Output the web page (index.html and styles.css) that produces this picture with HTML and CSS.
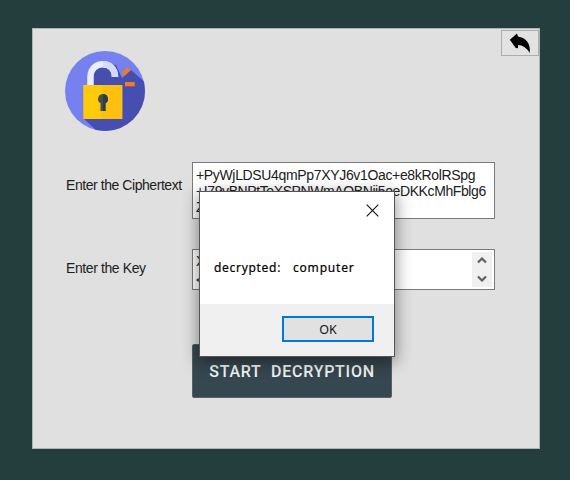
FILE: index.html
```html
<!DOCTYPE html>
<html lang="en">
<head>
<meta charset="utf-8">
<title>Decryption</title>
<link rel="stylesheet" href="styles.css">
</head>
<body>
<main class="panel">
  <header class="top">
    <svg class="logo" viewBox="0 0 80 80">
      <defs><clipPath id="disc"><circle cx="40" cy="40" r="40"/></clipPath></defs>
      <circle cx="40" cy="40" r="40" fill="#7680ee"/>
      <path clip-path="url(#disc)" fill="#464fb0" d="M18 67 L34 82 H82 V33 L66 19 L57 27 L51 14 L40 13 L28 20 V34 Z"/>
      <path fill="none" stroke="#e9edfd" stroke-width="6.500" d="M25.500 34V26C25.500 9 50 9 50 26"/>
      <path fill="none" stroke="#d3dcf6" stroke-width="6.500" d="M38 13.300C46 13.300 50 19 50 26"/>
      <path fill="#ffca0a" d="M18.300 34H57.300V68H18.300Z"/>
      <path fill="#fdb914" d="M38 34H57.300V68H36Z" opacity=".6"/>
      <path fill="#4b4b4b" d="M38 43a5 5 0 0 1 2.500 9.300V60h-5V52.300A5 5 0 0 1 38 43Z"/>
      <path fill="#263e50" d="M38 43a5 5 0 0 1 2.500 9.300V60H38Z"/>
      <path fill="#f27c25" d="M56.500 22 62.500 16.200 65.500 19.500 59.300 25ZM60 31H69.700V35.300H60Z"/>
    </svg>
    <button class="back" aria-label="Back">
      <svg viewBox="0 0 22 20"><path d="M.8 6.800 8 .6 9 3.500C17 4.500 22 11 20.700 20C17.500 14.500 13.500 12.300 9 12V15.300L6.800 15Z"/></svg>
    </button>
  </header>
  <section class="row cipher">
    <label class="label-cipher">Enter the Ciphertext</label>
    <div class="field"><span class="l1">+PyWjLDSU4qmPp7XYJ6v1Oac+e8kRolRSpg</span><span class="l2">+I79vBNPtTeXSPNWmAOBNji5oeDKKcMhFblg6</span><span>Z</span></div>
  </section>
  <section class="row key">
    <label class="label-key">Enter the Key</label>
    <div class="field"><div class="key-text"><span>X</span><span>&lt;</span></div>
      <div class="scroll">
        <svg viewBox="0 0 10 7"><path d="M1 5.500 5 1.500 9 5.500"/></svg>
        <svg viewBox="0 0 10 7"><path d="M1 1.500 5 5.500 9 1.500"/></svg>
      </div>
    </div>
  </section>
  <button class="start">START&nbsp; DECRYPTION</button>
</main>
<div class="dialog" role="dialog">
  <div class="content">
    <svg class="close" viewBox="0 0 13 13"><path d="M.7.700 12.300 12.300M12.300.700.700 12.300"/></svg>
    <p class="message"><span class="word1">decrypted:</span><span class="word2">computer</span></p>
  </div>
  <div class="actions"><button class="ok">OK</button></div>
</div>
</body>
</html>
```
FILE: styles.css
```css
* { box-sizing: border-box; }
body {
  margin: 0;
  height: 480px;
  padding: 28px 30px 32px 32px;
  background: #243d3d;
  font-family: "Liberation Sans", sans-serif;
  font-size: 14px;
  color: #202020;
  overflow: hidden;
}
button { font: inherit; padding: 0; margin: 0; }
.panel {
  width: 508px;
  height: 421px;
  background: #e0e0e0;
  border: 1px solid #aab5b5;
  display: flex;
  flex-direction: column;
}
.top {
  height: 133px;
  display: flex;
  justify-content: space-between;
}
.logo { width: 80px; height: 80px; margin: 22px 0 0 32px; }
.back {
  width: 38px;
  height: 26px;
  margin: 1px 0 0;
  border: 1px solid #adadad;
  background: #e2e2e2;
  display: flex;
  align-items: center;
  justify-content: center;
}
.back svg { width: 22px; height: 20px; }
.row { display: flex; align-items: flex-start; padding-left: 33px; }
.row label { width: 126px; white-space: nowrap; line-height: 16px; }
.cipher { height: 87px; }
.key { height: 95px; }
.label-cipher { letter-spacing: -.44px; padding-top: 15px; }
.label-key { letter-spacing: -.4px; padding-top: 11px; }
.field {
  width: 303px;
  height: 57px;
  padding: 4px 3px;
  border: 1px solid #7a7a7a;
  background: #fff;
  line-height: 16px;
  white-space: nowrap;
  overflow: hidden;
}
.field span { display: block; }
.l1 { letter-spacing: -.34px; }
.l2 { letter-spacing: -.4px; }
.key .field {
  height: 41px;
  padding: 2px 2px 2px 3px;
  display: flex;
  justify-content: space-between;
}
.key-text { line-height: 19px; }
.scroll {
  width: 20px;
  background: #f0f0f0;
  display: flex;
  flex-direction: column;
  align-items: center;
  justify-content: space-between;
  padding: 5px 0;
}
.scroll svg { width: 10px; height: 7px; }
.scroll path { fill: none; stroke: #606060; stroke-width: 2.2; }
.start {
  width: 200px;
  height: 54px;
  margin-left: 159px;
  border: 1px solid #53636a;
  border-radius: 2px;
  background: #37474f;
  color: #f2f5f6;
  font-family: Roboto, sans-serif;
  font-size: 16px;
  font-weight: 500;
  letter-spacing: .75px;
  white-space: nowrap;
}
.dialog {
  position: absolute;
  left: 199px;
  top: 191px;
  width: 196px;
  height: 166px;
  border: 1px solid #555;
  background: #fff;
  box-shadow: 0 4px 15px 1px rgba(0, 0, 0, .42);
  display: flex;
  flex-direction: column;
}
.content {
  height: 112px;
  display: flex;
  flex-direction: column;
}
.close {
  width: 13px;
  height: 13px;
  margin: 12px 15px 0 0;
  align-self: flex-end;
}
.close path { stroke: #111; stroke-width: 1.1; }
.message {
  display: flex;
  gap: 12px;
  margin: 42px 0 0 14px;
  font: 12px/18px "Noto Sans", sans-serif;
  color: #000;
  -webkit-text-stroke: .2px #000;
}
.word1 { width: 67px; letter-spacing: .7px; }
.word2 { letter-spacing: .8px; }
.actions {
  flex: 1;
  background: #f0f0f0;
  display: flex;
  justify-content: flex-end;
  padding: 12px 20px 0 0;
}
.ok {
  width: 92px;
  height: 26px;
  border: 2px solid #0078d7;
  background: #e1e1e1;
  font: 12.5px "Noto Sans", sans-serif;
  color: #111;
}
```
